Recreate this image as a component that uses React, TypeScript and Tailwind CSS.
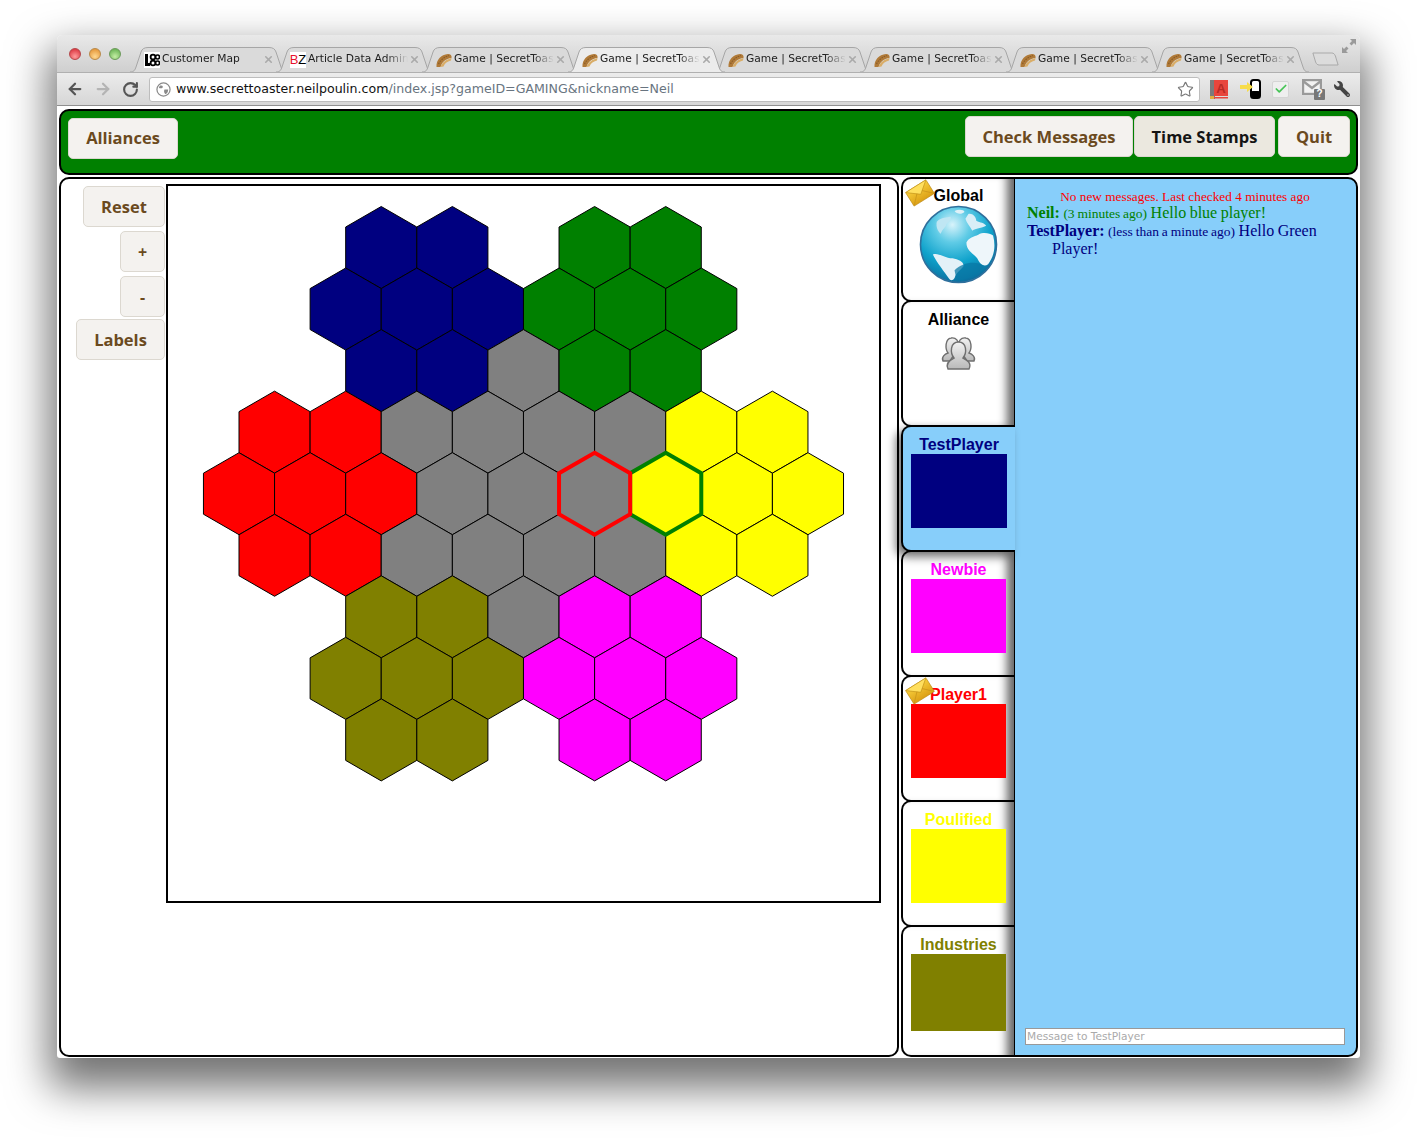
import React from "react";
import { ArrowLeft, ArrowRight, Check, RotateCw, Star, X } from "lucide-react";
import { FaWrench } from "react-icons/fa";

const HEX_R = 41;
const HEX_W = 35.56;

const hexPoints = (cx: number, cy: number) =>
  [
    [cx, cy - HEX_R],
    [cx + HEX_W, cy - HEX_R / 2],
    [cx + HEX_W, cy + HEX_R / 2],
    [cx, cy + HEX_R],
    [cx - HEX_W, cy + HEX_R / 2],
    [cx - HEX_W, cy - HEX_R / 2],
  ]
    .map((p) => p.join(","))
    .join(" ");

const NAVY = "#000080";
const GREEN = "#008000";
const GRAY = "#808080";
const RED = "#ff0000";
const YELLOW = "#ffff00";
const OLIVE = "#808000";
const PINK = "#ff00ff";

// each row: [column, colour]
const rows: [number, string][][] = [
  [[4, NAVY], [6, NAVY], [10, GREEN], [12, GREEN]],
  [[3, NAVY], [5, NAVY], [7, NAVY], [9, GREEN], [11, GREEN], [13, GREEN]],
  [[4, NAVY], [6, NAVY], [8, GRAY], [10, GREEN], [12, GREEN]],
  [[1, RED], [3, RED], [5, GRAY], [7, GRAY], [9, GRAY], [11, GRAY], [13, YELLOW], [15, YELLOW]],
  [[0, RED], [2, RED], [4, RED], [6, GRAY], [8, GRAY], [10, GRAY], [12, YELLOW], [14, YELLOW], [16, YELLOW]],
  [[1, RED], [3, RED], [5, GRAY], [7, GRAY], [9, GRAY], [11, GRAY], [13, YELLOW], [15, YELLOW]],
  [[4, OLIVE], [6, OLIVE], [8, GRAY], [10, PINK], [12, PINK]],
  [[3, OLIVE], [5, OLIVE], [7, OLIVE], [9, PINK], [11, PINK], [13, PINK]],
  [[4, OLIVE], [6, OLIVE], [10, PINK], [12, PINK]],
];

const colX = (c: number) => 239 + c * HEX_W;
const rowY = (r: number) => 247.5 + r * 61.55;

function HexMap() {
  return (
    <svg viewBox="168 186 711 715" className="block h-full w-full">
      {rows.map((row, r) =>
        row.map(([c, fill]) => (
          <polygon key={r + "-" + c} points={hexPoints(colX(c), rowY(r))} fill={fill} stroke="#000" strokeWidth="1" />
        ))
      )}
      <polygon points={hexPoints(colX(12), rowY(4))} fill={YELLOW} stroke={GREEN} strokeWidth="4" />
      <polygon points={hexPoints(colX(10), rowY(4))} fill={GRAY} stroke={RED} strokeWidth="4" />
    </svg>
  );
}

function Taco() {
  return (
    <svg viewBox="0 0 16 16" className="h-4 w-4 shrink-0">
      <path d="M0.5 15 C0 8 5 2.5 12 2 C14.5 2 16 3.5 15.5 6 C10 6.5 6 10 4.5 15 Z" fill="#b07a38" />
      <path d="M2.5 12 C4.5 8 8 5 13 3.6" fill="none" stroke="#8a5c28" strokeWidth="1.1" strokeDasharray="1.6 1" />
      <path d="M4.5 15 C6 10.5 10 7.5 15.5 6 L15 8.5 C11 9.5 8.5 11.5 7.5 14.5 Z" fill="#d9ad68" />
    </svg>
  );
}

function LccIcon() {
  return (
    <svg viewBox="0 0 16 16" className="h-4 w-4 shrink-0">
      <rect width="16" height="16" fill="#fff" />
      <rect x="1" y="2" width="3" height="12" fill="#000" />
      <rect x="1" y="11" width="5" height="3" fill="#000" />
      <circle cx="9" cy="5" r="2.4" fill="none" stroke="#000" strokeWidth="1.8" />
      <circle cx="9" cy="11" r="2.4" fill="none" stroke="#000" strokeWidth="1.8" />
      <circle cx="13.5" cy="5" r="2" fill="none" stroke="#000" strokeWidth="1.6" />
      <circle cx="13.5" cy="11" r="2" fill="none" stroke="#000" strokeWidth="1.6" />
    </svg>
  );
}

function BzIcon() {
  return (
    <span className="flex h-4 w-4 shrink-0 items-center justify-center bg-white font-['Liberation_Sans',sans-serif] text-[13px] leading-none">
      <span className="text-[#e8112d]">B</span>
      <span className="text-black">Z</span>
    </span>
  );
}

function ChromeTab({ title, icon, active }: { title: string; icon: React.ReactNode; active?: boolean }) {
  return (
    <div className={`relative -mr-[11px] h-[25px] w-[157px] shrink-0 ${active ? "z-10" : ""}`}>
      <svg viewBox="0 0 157 25" className="absolute inset-0 h-full w-full">
        <path
          d="M0 25 C4 25 5 23 6 20 L11 5 C12 2 14 .5 18 .5 L139 .5 C143 .5 145 2 146 5 L151 20 C152 23 153 25 157 25"
          fill={active ? "#ececec" : "#dadada"}
          stroke="#a6a6a6"
          strokeWidth="1"
        />
      </svg>
      <div className="relative flex h-full items-center pl-[14px]">
        {icon}
        <span className="ml-[2px] w-[100px] overflow-hidden whitespace-nowrap text-[10.7px] text-[#1c1c1c] [mask-image:linear-gradient(to_right,black_78%,transparent)]">
          {title}
        </span>
        <X size={11} strokeWidth={3.5} className="ml-[1px] text-[#aaa]" />
      </div>
    </div>
  );
}

function TabStrip() {
  return (
    <div className="relative flex h-[37px] items-end rounded-t-[5px] bg-gradient-to-b from-[#e9e9e9] to-[#cfcfcf] pl-[73px]">
      <div className="absolute left-[12px] top-[13px] flex gap-[8px]">
        <span className="h-3 w-3 rounded-full border border-[#b5474a] bg-[radial-gradient(circle_at_50%_75%,#ff9c9c,#d5232f)]" />
        <span className="h-3 w-3 rounded-full border border-[#b98a4a] bg-[radial-gradient(circle_at_50%_75%,#ffd890,#e08a28)]" />
        <span className="h-3 w-3 rounded-full border border-[#6c9a5a] bg-[radial-gradient(circle_at_50%_75%,#c4eea4,#58a845)]" />
      </div>
      <ChromeTab title="Customer Map" icon={<LccIcon />} />
      <ChromeTab title="Article Data Admin" icon={<BzIcon />} />
      <ChromeTab title="Game | SecretToaster" icon={<Taco />} />
      <ChromeTab title="Game | SecretToaster" icon={<Taco />} active />
      <ChromeTab title="Game | SecretToaster" icon={<Taco />} />
      <ChromeTab title="Game | SecretToaster" icon={<Taco />} />
      <ChromeTab title="Game | SecretToaster" icon={<Taco />} />
      <ChromeTab title="Game | SecretToaster" icon={<Taco />} />
      <svg viewBox="0 0 30 14" className="mb-[6px] ml-[14px] h-[14px] w-[27px]" preserveAspectRatio="none">
        <path d="M1 1 L22 1 C24 1 25 2 26 4 L29 13 L8 13 C6 13 5 12 4 10 Z" fill="#dcdcdc" stroke="#a6a6a6" />
      </svg>
      <svg viewBox="0 0 14 14" className="absolute right-[4px] top-[4px] h-[14px] w-[14px]" fill="#9a9a9a">
        <path d="M8 0 H14 V6 L12 4 L9.5 6.5 L7.5 4.5 L10 2 Z" />
        <path d="M6 14 H0 V8 L2 10 L4.5 7.5 L6.5 9.5 L4 12 Z" />
      </svg>
    </div>
  );
}

function GlobeSmall() {
  return (
    <svg viewBox="0 0 16 16" className="h-[15px] w-[15px] shrink-0">
      <circle cx="8" cy="8" r="7" fill="#fff" stroke="#8a8a8a" strokeWidth="1.3" />
      <path d="M4 4 C6 3 8 4 7 6 C6 7 4 7 3 6 Z M9 8 L13 8 C13 11 11 13 10 13 C9 12 8 10 9 8 Z" fill="#8a8a8a" />
    </svg>
  );
}

function Toolbar() {
  return (
    <div className="flex h-[34px] items-center border-t border-b border-t-[#b0b0b0] border-b-[#8f8f8f] bg-gradient-to-b from-[#ececec] to-[#d6d6d6] pl-[9px]">
      <ArrowLeft size={18} strokeWidth={3} className="text-[#555]" />
      <ArrowRight size={18} strokeWidth={3} className="ml-[10px] text-[#b4b4b4]" />
      <RotateCw size={17} strokeWidth={3} className="ml-[10px] text-[#555]" />
      <div className="ml-[10px] flex h-[25px] w-[1051px] items-center rounded-[3px] border border-[#bdbdbd] bg-white pl-[6px] pr-[5px]">
        <GlobeSmall />
        <div className="ml-[5px] flex-1 whitespace-nowrap text-[12.6px]">
          <span className="text-[#111]">www.secrettoaster.neilpoulin.com</span>
          <span className="text-[#687480]">/index.jsp?gameID=GAMING&amp;nickname=Neil</span>
        </div>
        <Star size={17} strokeWidth={1.6} className="text-[#777]" />
      </div>
      <svg viewBox="0 0 18 19" className="ml-[10px] h-[19px] w-[18px]">
        <rect x="0" y="0" width="5" height="19" fill="#7b7b7b" />
        <rect x="4" y="0" width="14" height="16" fill="#e8453c" />
        <rect x="4" y="17" width="14" height="1.5" fill="#e8453c" />
        <rect x="0" y="16" width="4" height="3" fill="#e0b040" />
        <text x="11" y="13" fontSize="13" fontWeight="700" textAnchor="middle" fill="#b72a24" fontFamily="Liberation Sans, sans-serif">A</text>
      </svg>
      <svg viewBox="0 0 21 20" className="ml-[12px] h-[20px] w-[21px]">
        <rect x="11" y="1" width="9" height="18" rx="2.5" fill="#fff" stroke="#000" strokeWidth="2" />
        <rect x="11" y="12" width="9" height="7" rx="1.5" fill="#000" />
        <path d="M0 6 H7 V3 L13 8 L7 13 V10 H0 Z" fill="#f7dc4a" />
      </svg>
      <div className="ml-[11px] flex h-[17px] w-[17px] items-center justify-center rounded-[2px] border border-[#d5d5d5] bg-[#efefef]">
        <Check size={14} strokeWidth={3} className="text-[#45c455]" />
      </div>
      <div className="relative ml-[13px] h-[21px] w-[23px]">
        <svg viewBox="0 0 20 16" className="absolute left-0 top-0 h-[16px] w-[20px]">
          <rect x="1" y="1" width="18" height="14" fill="#f2f2f2" stroke="#9a9a9a" strokeWidth="2.4" />
          <path d="M1 2 L10 9 L19 2" fill="none" stroke="#9a9a9a" strokeWidth="2.4" />
        </svg>
        <span className="absolute bottom-0 right-0 flex h-[11px] w-[11px] items-center justify-center rounded-[1px] bg-[#777] font-['Liberation_Sans',sans-serif] text-[10px] font-bold leading-none text-white">
          ?
        </span>
      </div>
      <FaWrench size={16} className="ml-[9px] -scale-x-100 text-[#444]" />
    </div>
  );
}

function TanButton({ label, className, on }: { label: string; className: string; on?: boolean }) {
  return (
    <button
      className={`flex h-[41px] items-center justify-center rounded-[5px] border border-[#dcd8d0] font-['Open_Sans',sans-serif] font-bold ${
        on ? "bg-[#ebe8df] text-[#141414]" : "bg-[#f4f2ef] text-[#6b4a1e]"
      } ${className}`}
    >
      {label}
    </button>
  );
}

function Envelope() {
  return (
    <svg viewBox="0 0 30 28" className="absolute left-[2px] top-[0px] z-20 h-[28px] w-[30px]">
      <defs>
        <linearGradient id="gold" x1="0" y1="0" x2="0" y2="1">
          <stop offset="0" stopColor="#f8cf3c" />
          <stop offset="1" stopColor="#dca016" />
        </linearGradient>
      </defs>
      <g transform="rotate(-32 15 14)">
        <rect x="3" y="6" width="24" height="16" rx="1" fill="url(#gold)" stroke="#b98712" strokeWidth=".6" />
        <path d="M3 6 L15 15.5 L27 6 Z" fill="#ffdf5e" stroke="#c08f16" strokeWidth=".6" />
        <path d="M3 22 L12 13 M27 22 L18 13" stroke="#c9941a" strokeWidth=".7" />
      </g>
    </svg>
  );
}

function Globe() {
  return (
    <svg viewBox="0 0 80 80" className="mx-auto block h-[79px] w-[79px]">
      <defs>
        <radialGradient id="sea" cx="42%" cy="24%" r="78%">
          <stop offset="0" stopColor="#d8f3fb" />
          <stop offset=".3" stopColor="#5fcbe6" />
          <stop offset=".65" stopColor="#0fa2cb" />
          <stop offset="1" stopColor="#0a6b9b" />
        </radialGradient>
      </defs>
      <circle cx="40" cy="40" r="38.5" fill="url(#sea)" stroke="#2f6f9c" strokeWidth="1.6" />
      <path d="M14 50 C20 48 26 54 34 54 C40 55 46 58 45 62 C42 66 38 68 36 74 C34 77 32 77 30 74 C26 68 18 58 14 50 Z" fill="#e3f1f8" />
      <path d="M48 38 C50 33 56 32 60 30 C66 27 72 29 75 31 C78 42 76 52 70 60 C66 63 62 60 60 56 C58 50 48 48 48 38 Z" fill="#eef6fa" />
      <path d="M18 17 C23 12 28 13 32 12 C33 15 30 17 28 19 C27 23 24 24 22 29 C19 27 17 22 18 17 Z" fill="#bfe6f3" />
      <path d="M50 9 C54 8 58 12 58 16 C62 18 66 18 68 21 C62 24 56 24 54 26 C52 22 48 18 47 14 Z" fill="#d8eef7" />
      <path d="M36 6 C40 4 46 5 46 7 C43 10 38 9 36 6 Z" fill="#dff1f8" />
      <path d="M36 66 C44 58 58 56 66 62 C58 72 46 77 38 76 Z" fill="#0878a5" opacity=".75" />
    </svg>
  );
}

function People() {
  return (
    <svg viewBox="0 0 37 36" className="mx-auto mt-[6px] block h-[36px] w-[37px]">
      <defs>
        <linearGradient id="man" x1="0" y1="0" x2="0" y2="1">
          <stop offset="0" stopColor="#f2f2f2" />
          <stop offset="1" stopColor="#b9b9b9" />
        </linearGradient>
      </defs>
      <g fill="url(#man)" stroke="#6f6f6f" strokeWidth="1.4">
        <path d="M3 26 C1 22 5 19 8 18 C5 14 5 4 11 3 C16 2 19 6 19 12 L10 26 Z" />
        <path d="M34 26 C36 22 32 19 29 18 C32 14 32 4 26 3 C21 2 18 6 18 12 L27 26 Z" />
        <path d="M8 34 C5 28 10 25 14 23 C10 18 10 7 18.5 7 C27 7 27 18 23 23 C27 25 32 28 29 34 Z" />
      </g>
    </svg>
  );
}

type SideTab = { name: string; color: string; swatch?: string; h: string; swatchClass?: string; mail?: boolean; active?: boolean; extra?: React.ReactNode };

const sideTabs: SideTab[] = [
  { name: "Global", color: "text-black", h: "h-[125px]", mail: true, extra: <Globe /> },
  { name: "Alliance", color: "text-black", h: "h-[127px]", extra: <People /> },
  { name: "TestPlayer", color: "text-[#000080]", h: "h-[127px]", swatch: "bg-[#000080]", swatchClass: "w-[96px] h-[74px]", active: true },
  { name: "Newbie", color: "text-[#ff00ff]", h: "h-[127px]", swatch: "bg-[#ff00ff]", swatchClass: "w-[95px] h-[74px]" },
  { name: "Player1", color: "text-[#ff0000]", h: "h-[127px]", swatch: "bg-[#ff0000]", swatchClass: "w-[95px] h-[74px]", mail: true },
  { name: "Poulified", color: "text-[#ffff00]", h: "h-[127px]", swatch: "bg-[#ffff00]", swatchClass: "w-[95px] h-[74px]" },
  { name: "Industries", color: "text-[#808000]", h: "h-[132px]", swatch: "bg-[#808000]", swatchClass: "w-[95px] h-[77px]" },
];

function PlayerTab({ tab }: { tab: SideTab }) {
  return (
    <div
      className={`relative -mt-[2px] rounded-l-[10px] border-y-2 border-l-2 border-black pt-[8px] first:mt-0 first:pt-[7px] ${tab.h} ${
        tab.active
          ? "z-10 -mr-[1px] bg-[#87cefa] shadow-[-5px_5px_10px_rgba(0,0,0,0.55)]"
          : "bg-white shadow-[inset_-14px_0_10px_-7px_rgba(0,0,0,0.6)]"
      }`}
    >
      {tab.mail && <Envelope />}
      <div className={`text-center font-['Liberation_Sans',sans-serif] text-[16px] font-bold leading-[19px] ${tab.color}`}>{tab.name}</div>
      {tab.swatch && <div className={`ml-[8px] ${tab.swatch} ${tab.swatchClass}`} />}
      {tab.extra}
    </div>
  );
}

function Chat() {
  return (
    <div className="flex w-[344px] flex-col rounded-r-[10px] border-y-2 border-r-2 border-l border-black bg-[#87cefa] pb-[10px] pl-[10px] pr-[11px] font-['Liberation_Serif',serif]">
      <div className="mt-[11px] text-center text-[13.3px] leading-[14px] text-[#ff0000]">No new messages. Last checked 4 minutes ago</div>
      <div className="pl-[27px] -indent-[25px] text-[16px] leading-[18px] text-[#008000] [word-spacing:-0.5px]">
        <b>Neil:</b> <span className="text-[13.5px] leading-none">(3 minutes ago)</span> Hello blue player!
      </div>
      <div className="pl-[27px] -indent-[25px] text-[16px] leading-[18px] text-[#000080] [word-spacing:-0.5px]">
        <b>TestPlayer:</b> <span className="text-[13.5px] leading-none">(less than a minute ago)</span> Hello Green Player!
      </div>
      <input
        placeholder="Message to TestPlayer"
        className="mt-auto h-[17px] w-[320px] border border-[#999] bg-white px-[1px] pb-[2px] font-['DejaVu_Sans',sans-serif] text-[10.6px] outline-none placeholder:text-[#aaa]"
      />
    </div>
  );
}

export default function App() {
  return (
    <div className="h-[1138px] w-[1417px] overflow-hidden bg-white pl-[57px] pt-[35px] font-['DejaVu_Sans',sans-serif]">
      <div className="h-[1023px] w-[1303px] rounded-t-[5px] rounded-b-[3px] bg-white shadow-[0_22px_42px_8px_rgba(0,0,0,0.55)]">
        <TabStrip />
        <Toolbar />
        <div className="px-[2px] pt-[3px]">
          <header className="flex h-[66px] w-[1299px] items-start justify-between rounded-[10px] border-2 border-black bg-[#008000] pl-[7px] pr-[6px]">
            <TanButton label="Alliances" className="mt-[7px] w-[110px] text-[16.5px]" />
            <div className="mt-[5px] flex">
              <TanButton label="Check Messages" className="w-[168px] pt-[1px] text-[16.5px]" />
              <TanButton label="Time Stamps" className="ml-[1px] w-[141px] pt-[1px] text-[16.5px]" on />
              <TanButton label="Quit" className="ml-[3px] w-[72px] pt-[1px] text-[16.5px]" />
            </div>
          </header>
          <main className="mt-[2px] flex h-[880px] w-[1299px]">
            <div className="flex h-full w-[840px] rounded-[10px] border-2 border-black bg-white">
              <div className="flex w-[104px] flex-col items-end pt-[7px]">
                <TanButton label="Reset" className="w-[82px] pt-[1px] text-[16.5px]" />
                <TanButton label="+" className="mt-[4px] w-[45px] text-[16px]" />
                <TanButton label="-" className="mt-[4px] w-[45px] text-[16px]" />
                <TanButton label="Labels" className="mt-[2px] w-[89px] pt-[1px] text-[16.5px]" />
              </div>
              <div className="ml-[1px] mt-[5px] h-[719px] w-[715px] border-2 border-black bg-white">
                <HexMap />
              </div>
            </div>
            <div className="ml-[2px] flex w-[113px] flex-col">
              {sideTabs.map((tab) => (
                <PlayerTab key={tab.name} tab={tab} />
              ))}
            </div>
            <Chat />
          </main>
        </div>
      </div>
    </div>
  );
}
